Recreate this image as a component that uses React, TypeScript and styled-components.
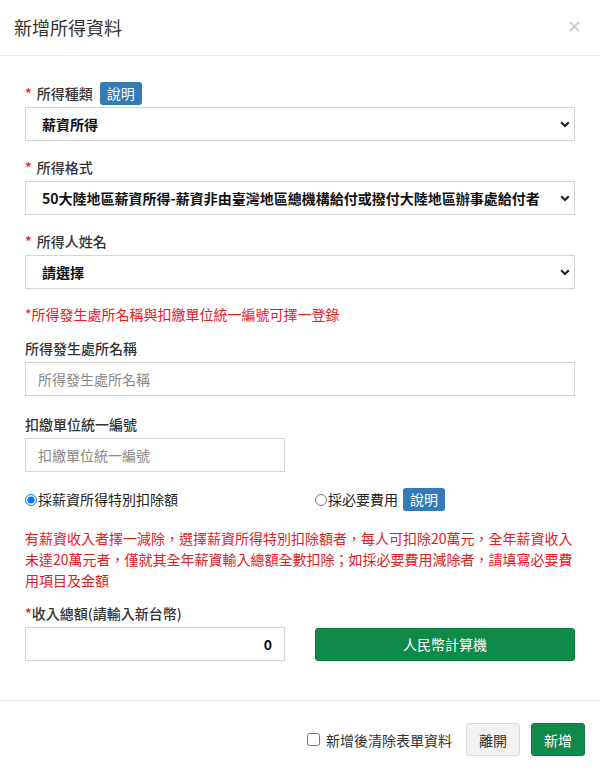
import React, { useState } from "react";
import styled, { createGlobalStyle } from "styled-components";

const GlobalStyle = createGlobalStyle`
  html, body {
    margin: 0;
    padding: 0;
    background: #ffffff;
  }
  body {
    font-family: "Noto Sans CJK TC", "Noto Sans", "Liberation Sans", sans-serif;
    font-size: 14px;
    color: #333;
  }
  * {
    box-sizing: border-box;
  }
`;

const Modal = styled.div`
  width: 600px;
  height: 780px;
  background: #ffffff;
  display: flex;
  flex-direction: column;
`;

const Header = styled.div`
  display: flex;
  align-items: center;
  justify-content: space-between;
  height: 56px;
  padding: 0 18px 2px 14px;
  border-bottom: 1px solid #ececec;
`;

const Title = styled.h4`
  margin: 0;
  font-size: 18px;
  font-weight: 400;
  line-height: 24px;
  color: #333;
`;

const CloseButton = styled.button`
  border: none;
  background: none;
  padding: 0;
  width: 16px;
  height: 16px;
  display: flex;
  align-items: center;
  justify-content: center;
  cursor: pointer;
`;

const Body = styled.div`
  flex: 1;
  padding: 26px 25px 0;
  border-bottom: 1px solid #ececec;
`;

const Group = styled.div<{ $gap?: number }>`
  margin-bottom: ${(p) => p.$gap ?? 15}px;
`;

const LabelRow = styled.div`
  display: flex;
  align-items: center;
  gap: 7px;
  height: 22px;
  margin-bottom: 3px;
`;

const Label = styled.label`
  font-size: 14px;
  line-height: 22px;
  font-weight: 500;
  color: #333;
`;

const Star = styled.span<{ $space?: boolean }>`
  color: #e0201f;
  margin-right: ${(p) => (p.$space ? 5 : 0)}px;
`;

const Badge = styled.span`
  display: inline-flex;
  align-items: center;
  height: 23px;
  padding: 0 7px;
  background: #337ab7;
  color: #ffffff;
  border-radius: 3px;
  font-size: 14px;
  line-height: 23px;
`;

const SelectWrap = styled.div`
  position: relative;
  width: 100%;
  height: 34px;
`;

const Select = styled.select`
  appearance: none;
  width: 100%;
  height: 34px;
  padding: 0 34px 0 16px;
  border: 1px solid #d5d5d5;
  border-radius: 0;
  background: #ffffff;
  font-family: inherit;
  font-size: 14px;
  font-weight: 700;
  color: #111;
  outline: none;
`;

const Chevron = styled.svg`
  position: absolute;
  right: 5px;
  top: 14px;
  pointer-events: none;
`;

const Input = styled.input<{ $half?: boolean; $right?: boolean }>`
  display: block;
  width: ${(p) => (p.$half ? "260px" : "100%")};
  height: 34px;
  padding: 0 12px;
  border: 1px solid #d5d5d5;
  border-radius: 0;
  font-family: inherit;
  font-size: 14px;
  font-weight: ${(p) => (p.$right ? 700 : 400)};
  color: #111;
  text-align: ${(p) => (p.$right ? "right" : "left")};
  outline: none;

  &::placeholder {
    color: #888;
  }
`;

const Note = styled.p`
  margin: 0 0 13px;
  color: #e0201f;
  font-size: 14px;
  line-height: 20px;
`;

const TwoCol = styled.div`
  display: grid;
  grid-template-columns: 260px 260px;
  column-gap: 30px;
  align-items: center;
`;

const RadioLabel = styled.label`
  display: flex;
  align-items: center;
  font-size: 14px;
  line-height: 23px;
  color: #222;
`;

const Radio = styled.input`
  width: 12px;
  height: 12px;
  margin: 0 1px 0 0;
`;

const RadioCell = styled.div`
  display: flex;
  align-items: center;
  gap: 5px;
  height: 23px;
`;

const Paragraph = styled.p`
  margin: 0 0 11px;
  color: #e0201f;
  font-size: 14px;
  line-height: 21px;
`;

const GreenButton = styled.button<{ $small?: boolean }>`
  height: 33px;
  padding: 0 ${(p) => (p.$small ? 12 : 0)}px;
  background: #0f8a4b;
  border: 1px solid #0c7a41;
  border-radius: 3px;
  color: #ffffff;
  font-family: inherit;
  font-size: 14px;
  cursor: pointer;
`;

const Footer = styled.div`
  display: flex;
  align-items: center;
  justify-content: flex-end;
  gap: 11px;
  height: 79px;
  padding: 0 15px 2px;
`;

const CheckLabel = styled.label`
  display: flex;
  align-items: center;
  gap: 6px;
  margin-right: 3px;
  font-size: 14px;
  color: #333;
`;

const Checkbox = styled.input`
  width: 13px;
  height: 13px;
  margin: 0;
`;

const GrayButton = styled.button`
  height: 33px;
  padding: 0 12px;
  background: #f2f2f2;
  border: 1px solid #dcdcdc;
  border-radius: 3px;
  color: #333;
  font-family: inherit;
  font-size: 14px;
  cursor: pointer;
`;

const ChevronIcon = () => (
  <Chevron width="10" height="7" viewBox="0 0 10 7">
    <polyline
      points="1.2,1.2 5,5 8.8,1.2"
      fill="none"
      stroke="#222"
      strokeWidth="2.2"
    />
  </Chevron>
);

const App: React.FC = () => {
  const [deduction, setDeduction] = useState("special");
  const [clearAfter, setClearAfter] = useState(false);

  return (
    <>
      <GlobalStyle />
      <Modal>
        <Header>
          <Title>新增所得資料</Title>
          <CloseButton aria-label="close">
            <svg width="11" height="11" viewBox="0 0 11 11">
              <path d="M1 1L10 10M10 1L1 10" stroke="#c4c4c4" strokeWidth="1.6" />
            </svg>
          </CloseButton>
        </Header>

        <Body>
          <Group>
            <LabelRow>
              <Label>
                <Star $space>*</Star>所得種類
              </Label>
              <Badge>說明</Badge>
            </LabelRow>
            <SelectWrap>
              <Select defaultValue="salary">
                <option value="salary">薪資所得</option>
              </Select>
              <ChevronIcon />
            </SelectWrap>
          </Group>

          <Group>
            <LabelRow>
              <Label>
                <Star $space>*</Star>所得格式
              </Label>
            </LabelRow>
            <SelectWrap>
              <Select defaultValue="50">
                <option value="50">
                  50大陸地區薪資所得-薪資非由臺灣地區總機構給付或撥付大陸地區辦事處給付者
                </option>
              </Select>
              <ChevronIcon />
            </SelectWrap>
          </Group>

          <Group>
            <LabelRow>
              <Label>
                <Star $space>*</Star>所得人姓名
              </Label>
            </LabelRow>
            <SelectWrap>
              <Select defaultValue="">
                <option value="">請選擇</option>
              </Select>
              <ChevronIcon />
            </SelectWrap>
          </Group>

          <Note>*所得發生處所名稱與扣繳單位統一編號可擇一登錄</Note>

          <Group $gap={17}>
            <LabelRow>
              <Label>所得發生處所名稱</Label>
            </LabelRow>
            <Input placeholder="所得發生處所名稱" />
          </Group>

          <Group $gap={16}>
            <LabelRow>
              <Label>扣繳單位統一編號</Label>
            </LabelRow>
            <Input $half placeholder="扣繳單位統一編號" />
          </Group>

          <Group $gap={17}>
            <TwoCol>
              <RadioCell>
                <RadioLabel>
                  <Radio
                    type="radio"
                    name="deduction"
                    checked={deduction === "special"}
                    onChange={() => setDeduction("special")}
                  />
                  採薪資所得特別扣除額
                </RadioLabel>
              </RadioCell>
              <RadioCell>
                <RadioLabel>
                  <Radio
                    type="radio"
                    name="deduction"
                    checked={deduction === "expense"}
                    onChange={() => setDeduction("expense")}
                  />
                  採必要費用
                </RadioLabel>
                <Badge>說明</Badge>
              </RadioCell>
            </TwoCol>
          </Group>

          <Paragraph>
            有薪資收入者擇一減除，選擇薪資所得特別扣除額者，每人可扣除20萬元，全年薪資收入未達20萬元者，僅就其全年薪資輸入總額全數扣除；如採必要費用減除者，請填寫必要費用項目及金額
          </Paragraph>

          <Group>
            <LabelRow>
              <Label>
                <Star>*</Star>收入總額(請輸入新台幣)
              </Label>
            </LabelRow>
            <TwoCol>
              <Input $half $right defaultValue="0" />
              <GreenButton>人民幣計算機</GreenButton>
            </TwoCol>
          </Group>
        </Body>

        <Footer>
          <CheckLabel>
            <Checkbox
              type="checkbox"
              checked={clearAfter}
              onChange={(e) => setClearAfter(e.target.checked)}
            />
            新增後清除表單資料
          </CheckLabel>
          <GrayButton>離開</GrayButton>
          <GreenButton $small>新增</GreenButton>
        </Footer>
      </Modal>
    </>
  );
};

export default App;
